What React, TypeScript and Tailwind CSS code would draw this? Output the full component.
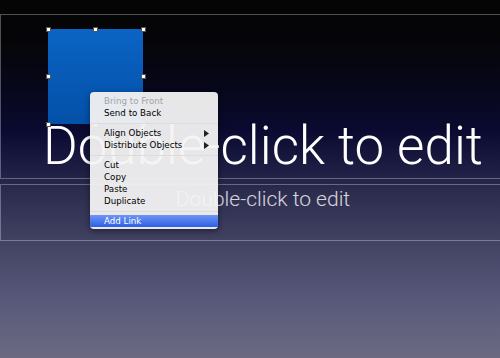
import React from "react";

function Arrow() {
  return (
    <svg width="5" height="7" viewBox="0 0 5 7" className="mr-[9px]">
      <polygon points="0,0 5,3.5 0,7" fill="#222" />
    </svg>
  );
}

function Item({ label, disabled, sub, active }: { label: string; disabled?: boolean; sub?: boolean; active?: boolean }) {
  return (
    <div
      className={
        "h-[12px] flex items-center justify-between pl-[14px] " +
        (active
          ? "bg-[linear-gradient(to_bottom,#6f95f3,#2c5fe6)] text-white"
          : disabled
          ? "text-[#a3a3a3]"
          : "text-black")
      }
    >
      <span>{label}</span>
      {sub && <Arrow />}
    </div>
  );
}

function Sep() {
  return (
    <div className="h-[8px] flex items-center">
      <div className="w-full h-px bg-[#dcdcdc]" />
    </div>
  );
}

const handle = "absolute w-[5px] h-[5px] bg-white border border-[#555]";

export default function App() {
  return (
    <div className="relative w-[500px] h-[358px] overflow-hidden bg-[linear-gradient(to_bottom,#050505_0px,#050508_40px,#07071c_90px,#0a0a30_130px,#1e1e44_170px,#2b2b4e_190px,#414162_240px,#58587a_300px,#6c6a82_358px)]">
      <div className="flex flex-col pt-[14px]">
        <div className="w-[525px] h-[165px] border-t border-l border-b border-white/30 flex items-end justify-center pb-[5px]">
          <span className="font-['Roboto',sans-serif] font-light text-[53px] leading-[53px] text-white whitespace-nowrap">
            Double-click to edit
          </span>
        </div>
        <div className="mt-[5px] w-[525px] h-[57px] border-t border-l border-b border-white/30 flex justify-center pt-[4px]">
          <span className="font-['Roboto',sans-serif] font-light text-[21px] leading-[21px] text-white/80 whitespace-nowrap">
            Double-click to edit
          </span>
        </div>
      </div>

      {/* selected shape with handles */}
      <div className="absolute left-[48px] top-[29px] w-[95px] h-[95px] bg-[linear-gradient(to_bottom,#0b64c4,#0350a8)]">
        <div className={handle + " -left-[2px] -top-[2px]"} />
        <div className={handle + " left-[45px] -top-[2px]"} />
        <div className={handle + " -right-[3px] -top-[2px]"} />
        <div className={handle + " -left-[2px] top-[45px]"} />
        <div className={handle + " -right-[3px] top-[45px]"} />
        <div className={handle + " -left-[2px] -bottom-[3px]"} />
        <div className={handle + " left-[45px] -bottom-[3px]"} />
        <div className={handle + " -right-[3px] -bottom-[3px]"} />
      </div>

      {/* context menu */}
      <div className="absolute left-[90px] top-[92px] w-[128px] rounded-[4px] bg-[#f3f3f3]/95 shadow-[0_2px_6px_rgba(0,0,0,0.45)] pt-[3px] pb-[2px] overflow-hidden font-['DejaVu_Sans',sans-serif] text-[8.7px] leading-[12px]">
        <Item label="Bring to Front" disabled />
        <Item label="Send to Back" />
        <Sep />
        <Item label="Align Objects" sub />
        <Item label="Distribute Objects" sub />
        <Sep />
        <Item label="Cut" />
        <Item label="Copy" />
        <Item label="Paste" />
        <Item label="Duplicate" />
        <Sep />
        <Item label="Add Link" active />
      </div>
    </div>
  );
}
